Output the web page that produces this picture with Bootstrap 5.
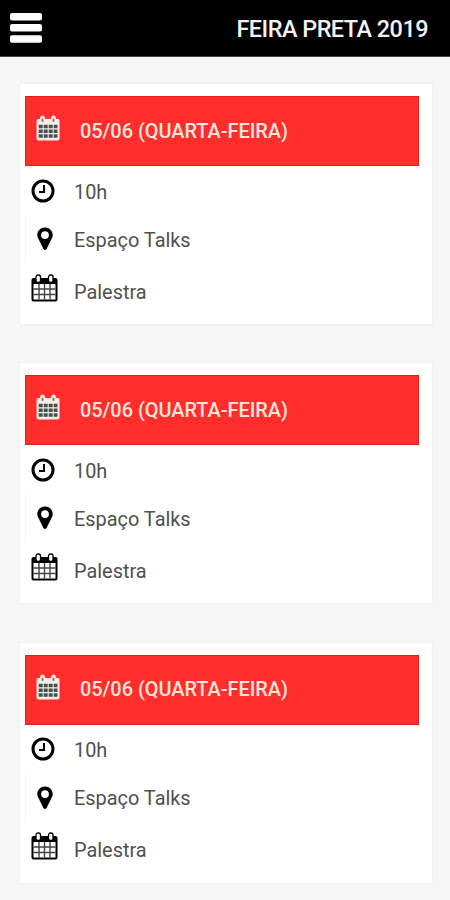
<!DOCTYPE html>
<html lang="pt-BR">
<head>
<meta charset="utf-8">
<meta name="viewport" content="width=device-width, initial-scale=1">
<title>Feira Preta 2019</title>
<link href="https://cdn.jsdelivr.net/npm/bootstrap@5.3.0/dist/css/bootstrap.min.css" rel="stylesheet">
<style>
body{background:#f6f6f6;font-family:Roboto,sans-serif;color:#505050;height:900px;overflow:hidden}
.topbar{height:57px;background:#000;border-bottom:1px solid #444;padding:0 22px 0 9px}
.topbar h1{font-size:23.4px;font-weight:500;letter-spacing:-.5px;color:#f4f4f4;line-height:28px;padding-top:2px;white-space:nowrap}
.events{padding:26px 17px 0 19px;gap:37.4px}
.event{height:242px;border:1px solid #f1f1f1;border-radius:0;padding:12px 13px 0 5px;background:#fff;flex:none}
.event-date{height:70px;background:#ff2d2c;border:1px solid #e51f20;color:#ffe6dc;font-size:19.9px;font-weight:500;padding-left:10px;white-space:nowrap}
.event-date span{padding-top:1px}
.event-date svg{width:24px;height:26px;margin-right:20px;margin-top:-6px}
.event-row{font-size:19.9px;padding-left:6px;white-space:nowrap}
.event-row .label{padding-top:3px}
.row-time{height:49px}
.row-time .label{padding-top:4px}
.row-place{height:48px;border-left:1px solid #f6f6f6;padding-left:5px}
.row-kind{height:56px}
.ico{width:27px;margin-right:16px;flex:none}
.row-place .ico{padding-left:1px}
.row-kind .ico{padding-bottom:7px}
svg{display:block;flex:none}
</style>
</head>
<body>
<svg width="0" height="0" class="position-absolute" aria-hidden="true">
<symbol id="cal" viewBox="0 0 27 28">
<path fill="#000" d="M2.500 4H24.500Q26.500 4 26.500 6V25.500Q26.500 27.500 24.500 27.500H2.500Q.5 27.500 .5 25.500V6Q.5 4 2.500 4Z"/>
<path fill="#fff" d="M2.500 10H24.500V25.500H2.500Z"/>
<path fill="none" stroke="#444" stroke-width="1.400" d="M8 10V25.500M13.500 10V25.500M19 10V25.500M2.500 15H24.500M2.500 20.500H24.500"/>
<rect x="5" y="1" width="4.500" height="7.500" rx="2" fill="#fff" stroke="#000" stroke-width="1.300"/>
<rect x="17.500" y="1" width="4.500" height="7.500" rx="2" fill="#fff" stroke="#000" stroke-width="1.300"/>
</symbol>
<symbol id="cal-light" viewBox="0 0 24 26">
<path fill="#ffeae4" d="M2 4H4Q4 .5 6.500 .5T9 4H15Q15 .5 17.500 .5T20 4H22Q23.500 4 23.500 6V23.500Q23.500 25.500 21.500 25.500H2.500Q.5 25.500 .5 23.500V6Q.5 4 2 4Z"/>
<path fill="#3f5553" d="M2.700 9.700h4v3.600h-4zM7.700 9.700h4v3.600h-4zM12.700 9.700h4v3.600h-4zM17.700 9.700h3.800v3.600h-3.800zM2.700 14.500h4v3.600h-4zM7.700 14.500h4v3.600h-4zM12.700 14.500h4v3.600h-4zM17.700 14.500h3.800v3.600h-3.800zM2.700 19.300h4v3.400h-4zM7.700 19.300h4v3.400h-4zM12.700 19.300h4v3.400h-4zM17.700 19.300h3.800v3.400h-3.800z"/>
<path stroke="#6b8580" stroke-width="2" stroke-linecap="round" d="M6.500 4.500V6M17.500 4.500V6"/>
</symbol>
<symbol id="clock" viewBox="0 0 24 24">
<circle cx="12" cy="12" r="10" fill="none" stroke="#000" stroke-width="3"/>
<path fill="none" stroke="#000" stroke-width="2" d="M13 6V13H8"/>
</symbol>
<symbol id="pin" viewBox="0 0 16 24">
<path fill="#000" fill-rule="evenodd" d="M8 .5C12.500 .5 15.700 3.700 15.700 8C15.700 10 14.800 11.500 14 13L9.600 22Q8 24.200 6.400 22L2 13C1.200 11.500 .3 10 .3 8C.3 3.700 3.500 .5 8 .5ZM8 4.200A3.900 3.900 0 1 0 8 12A3.900 3.900 0 1 0 8 4.200Z"/>
</symbol>
</svg>

<header class="topbar d-flex align-items-center justify-content-between">
<svg width="34" height="34" viewBox="0 0 34 34" role="img" aria-label="Menu"><g fill="#fff"><rect x="1" y="2" width="32" height="7.500" rx="2"/><rect x="1" y="13" width="32" height="7.500" rx="2"/><rect x="1" y="24.300" width="32" height="7.500" rx="2"/></g></svg>
<h1 class="m-0">FEIRA PRETA 2019</h1>
</header>

<main class="events d-flex flex-column">
<section class="event card">
<div class="event-date d-flex align-items-center"><svg><use href="#cal-light"/></svg><span>05/06 (QUARTA-FEIRA)</span></div>
<div class="event-row row-time d-flex align-items-center"><span class="ico"><svg width="24" height="24"><use href="#clock"/></svg></span><span class="label">10h</span></div>
<div class="event-row row-place d-flex align-items-center"><span class="ico d-flex justify-content-center"><svg width="16" height="24"><use href="#pin"/></svg></span><span class="label">Espaço Talks</span></div>
<div class="event-row row-kind d-flex align-items-center"><span class="ico"><svg width="27" height="28"><use href="#cal"/></svg></span><span class="label">Palestra</span></div>
</section>
<section class="event card">
<div class="event-date d-flex align-items-center"><svg><use href="#cal-light"/></svg><span>05/06 (QUARTA-FEIRA)</span></div>
<div class="event-row row-time d-flex align-items-center"><span class="ico"><svg width="24" height="24"><use href="#clock"/></svg></span><span class="label">10h</span></div>
<div class="event-row row-place d-flex align-items-center"><span class="ico d-flex justify-content-center"><svg width="16" height="24"><use href="#pin"/></svg></span><span class="label">Espaço Talks</span></div>
<div class="event-row row-kind d-flex align-items-center"><span class="ico"><svg width="27" height="28"><use href="#cal"/></svg></span><span class="label">Palestra</span></div>
</section>
<section class="event card">
<div class="event-date d-flex align-items-center"><svg><use href="#cal-light"/></svg><span>05/06 (QUARTA-FEIRA)</span></div>
<div class="event-row row-time d-flex align-items-center"><span class="ico"><svg width="24" height="24"><use href="#clock"/></svg></span><span class="label">10h</span></div>
<div class="event-row row-place d-flex align-items-center"><span class="ico d-flex justify-content-center"><svg width="16" height="24"><use href="#pin"/></svg></span><span class="label">Espaço Talks</span></div>
<div class="event-row row-kind d-flex align-items-center"><span class="ico"><svg width="27" height="28"><use href="#cal"/></svg></span><span class="label">Palestra</span></div>
</section>
</main>
<script src="https://cdn.jsdelivr.net/npm/bootstrap@5.3.0/dist/js/bootstrap.bundle.min.js"></script>
</body>
</html>
